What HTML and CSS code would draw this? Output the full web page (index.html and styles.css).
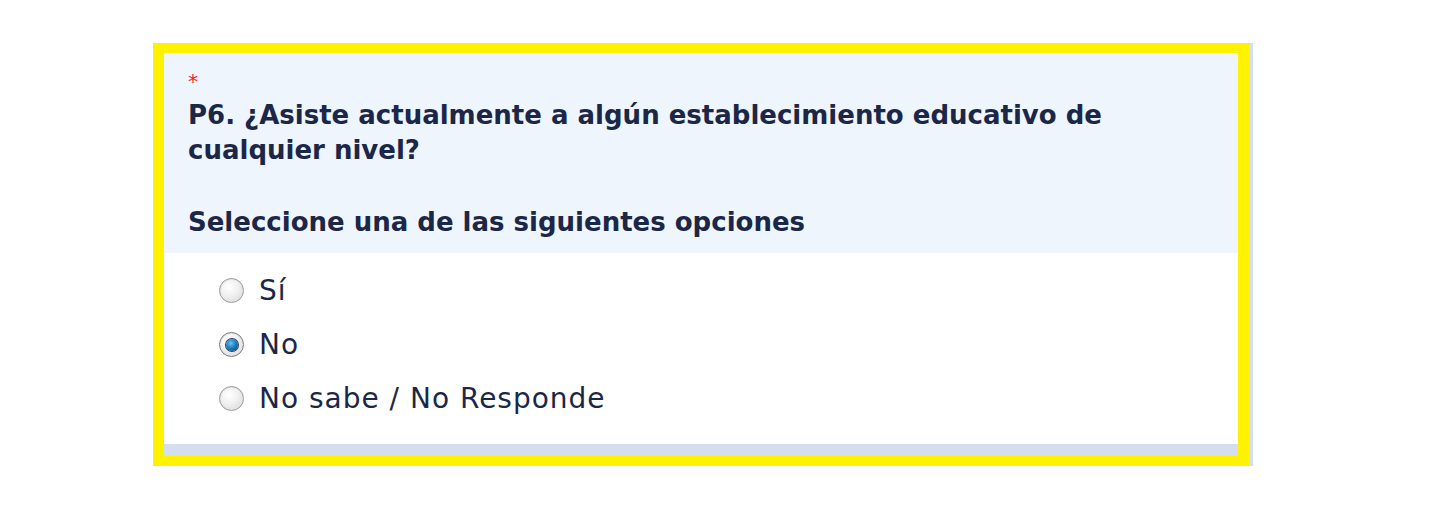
FILE: index.html
```html
<!DOCTYPE html>
<html lang="es">
<head>
<meta charset="utf-8">
<title>P6</title>
<link rel="stylesheet" href="styles.css">
</head>
<body>
<div class="frame">
  <div class="question">
    <div class="q-head">
      <div class="req">*</div>
      <div class="q-title">P6. ¿Asiste actualmente a algún establecimiento educativo de cualquier nivel?</div>
      <div class="q-help">Seleccione una de las siguientes opciones</div>
    </div>
    <div class="q-body">
      <label class="opt"><span class="radio"></span><span class="opt-text">Sí</span></label>
      <label class="opt"><span class="radio checked"></span><span class="opt-text">No</span></label>
      <label class="opt"><span class="radio"></span><span class="opt-text">No sabe / No Responde</span></label>
    </div>
    <div class="q-foot"></div>
  </div>
</div>
</body>
</html>
```
FILE: styles.css
```css
html, body {
  margin: 0;
  padding: 0;
  background: #ffffff;
}
body {
  padding: 43px 0 0 153px;
  font-family: "DejaVu Sans", Verdana, sans-serif;
  color: #1c2748;
}
.frame {
  width: 1100px;
  background: #d3dfee;
}
.question {
  width: 1074px;
  border-style: solid;
  border-color: #fff200;
  border-width: 10px 11px 10px 11px;
  background: #ffffff;
}
.q-head {
  background: #eef5fd;
  padding: 19px 24px 0 24px;
  height: 181px;
}
.req {
  color: #ff1a1a;
  font-size: 20px;
  line-height: 18px;
  height: 18px;
}
.q-title {
  font-weight: bold;
  font-size: 26px;
  line-height: 35px;
  margin-top: 8px;
  width: 940px;
}
.q-help {
  font-weight: bold;
  font-size: 26px;
  line-height: 35px;
  margin-top: 37px;
}
.q-body {
  padding: 20px 0 0 55px;
  height: 191px;
  box-sizing: border-box;
  display: flex;
  flex-direction: column;
  gap: 19px;
}
.opt {
  display: flex;
  align-items: center;
  gap: 15px;
  height: 35px;
  font-size: 28px;
  letter-spacing: 1px;
}
.radio {
  width: 23px;
  height: 23px;
  border-radius: 50%;
  border: 1px solid #9a9a9a;
  background: radial-gradient(circle at 40% 35%, #ffffff 0%, #f0f0f0 45%, #d4d4d4 100%);
  box-shadow: inset 0 0 0 1px #e6e6e6;
  position: relative;
  flex: none;
}
.radio.checked {
  border-color: #7c7c7c;
}
.radio.checked::after {
  content: "";
  position: absolute;
  left: 5.5px;
  top: 5.5px;
  width: 12px;
  height: 12px;
  border-radius: 50%;
  background: radial-gradient(circle at 40% 35%, #6cc6f2 0%, #1c7fc1 45%, #0a3f6e 100%);
  box-shadow: 0 0 0 1px #2a3f55;
}
.q-foot {
  height: 12px;
  background: #d3dfee;
}
```
